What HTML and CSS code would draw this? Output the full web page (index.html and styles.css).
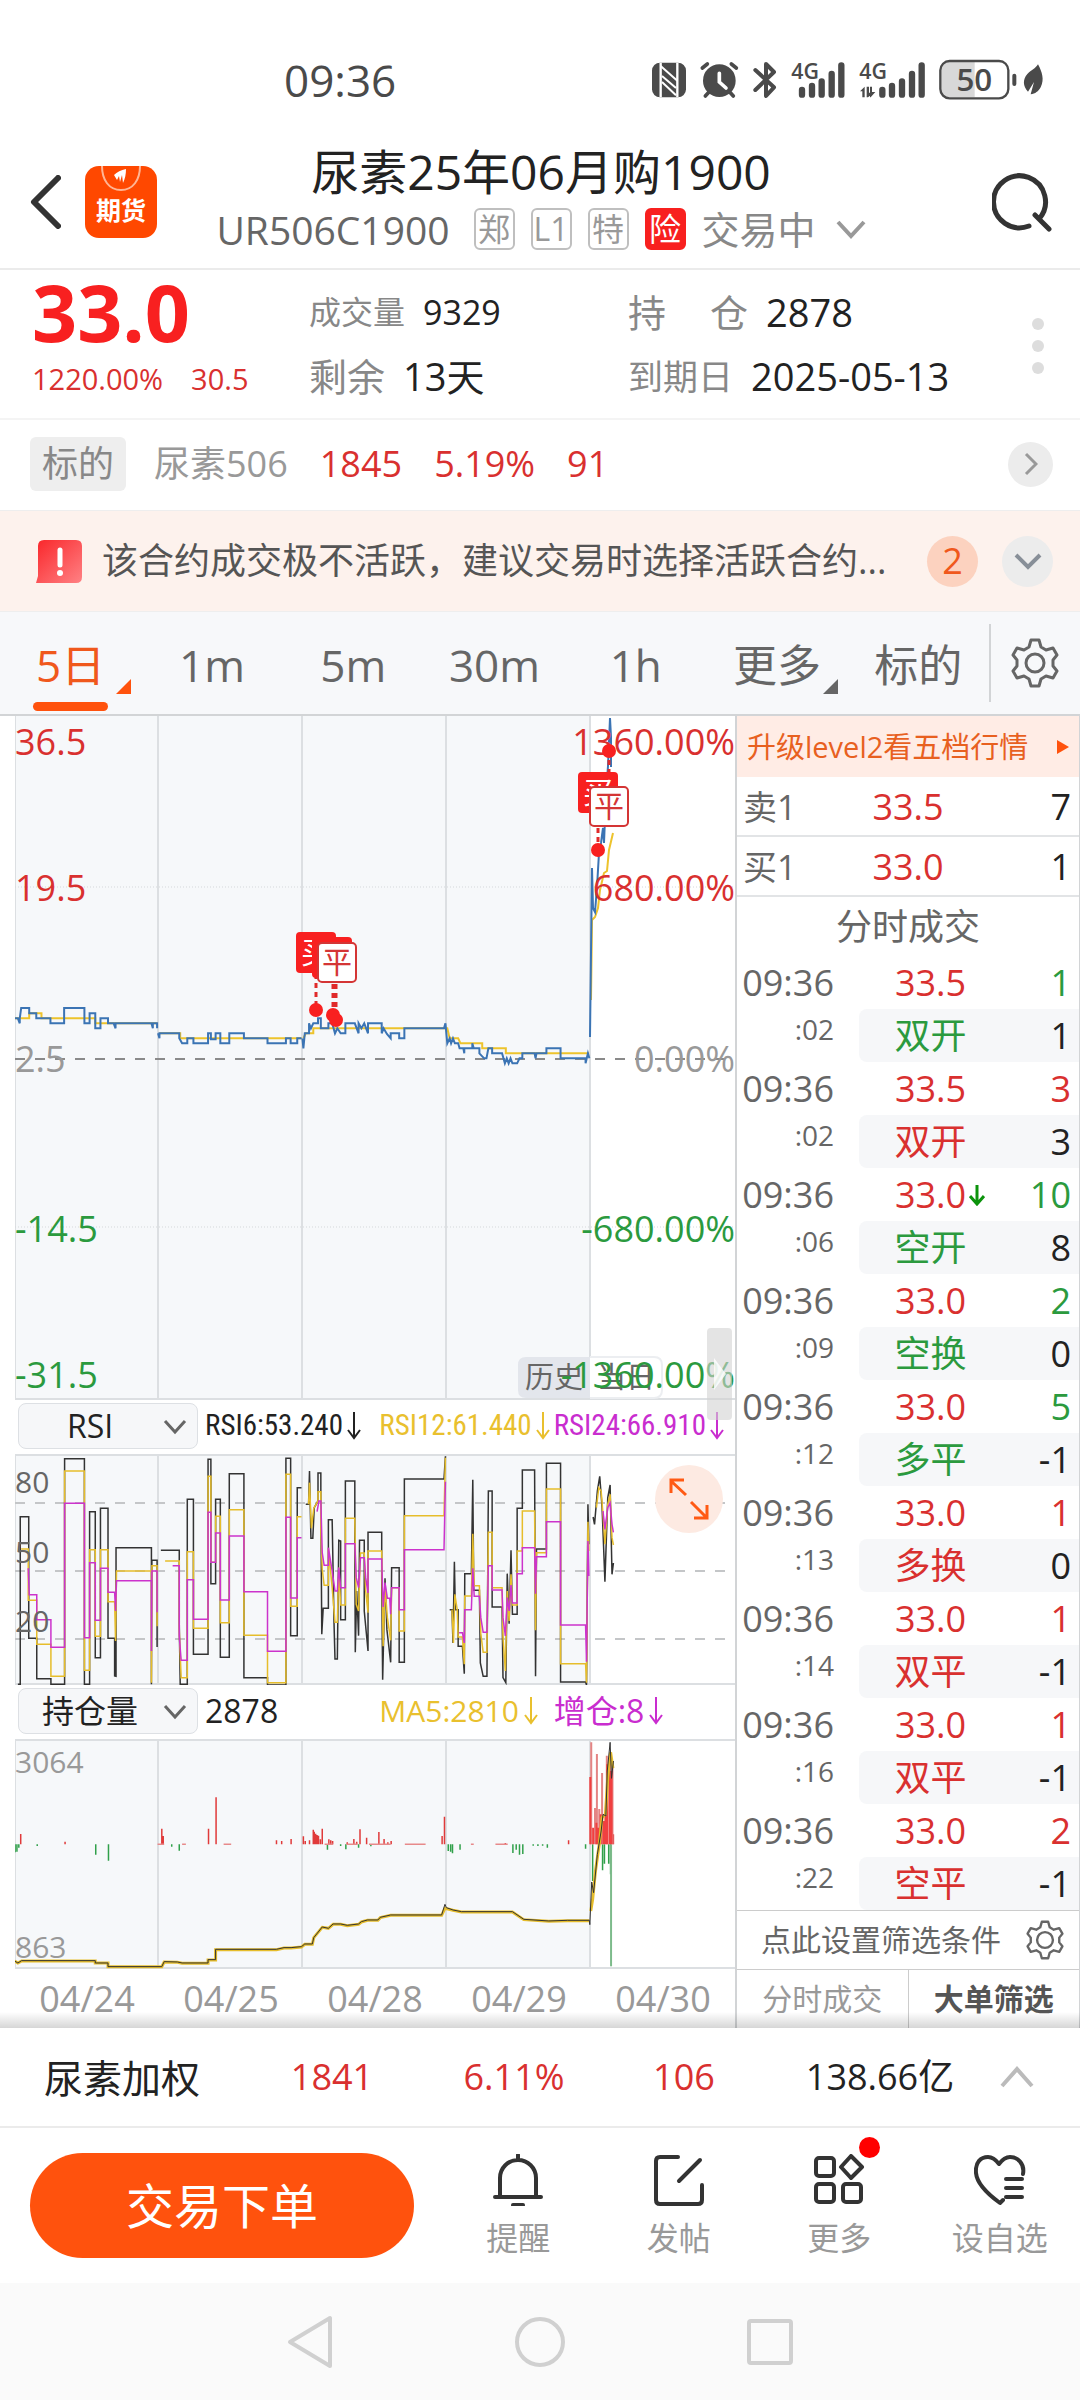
FILE: index.html
```html
<!DOCTYPE html>
<html lang="zh-CN">
<head>
<meta charset="utf-8">
<meta name="viewport" content="width=device-width, initial-scale=1">
<title>尿素25年06月购1900</title>
<link rel="stylesheet" href="styles.css">
</head>
<body>
<header class="status">
  <time class="status-time">09:36</time>
  <svg class="status-icons" viewBox="0 0 1260 180" aria-hidden="true">
    <g fill="#4a4a4a">
      <rect x="36" y="38" width="102" height="104" rx="24"/>
      <path d="M62 38V142M112 38V142" fill="none" stroke="#fff" stroke-width="7"/>
      <path d="M62 48L112 92M66 78L108 114M66 96L108 136" stroke="#fff" stroke-width="6"/>
      <circle cx="238" cy="92" r="49"/>
      <path d="M187 54L202 42M289 54L274 42M207 126L196 138M269 126L280 138" stroke="#4a4a4a" stroke-width="11" stroke-linecap="round"/>
      <path d="M238 70V96L258 114" fill="none" stroke="#fff" stroke-width="11" stroke-linecap="round"/>
      <path d="M346 60L402 112L378 138V42L402 66L346 120" fill="none" stroke="#4a4a4a" stroke-width="12" stroke-linejoin="round" stroke-linecap="round"/>
      <path d="M486 120V134M516 108V134M545 94V134M575 72V134M604 46V134M727 120V134M756 108V134M786 94V134M816 72V134M845 46V134" stroke="#4a4a4a" stroke-width="19" stroke-linecap="round"/>
      <path d="M660 124L674 110V142H667V124ZM680 110H687V128H702L684 142H680ZM690 110H696V126H706L692 142H690Z"/>
    </g>
    <text class="status-net" x="454" y="86">4G</text>
    <text class="status-net" x="658" y="86">4G</text>
    <path d="M926 36H1004V142H926Q904 142 904 120V58Q904 36 926 36Z" fill="#d8d8d8"/>
    <rect x="901" y="33" width="204" height="112" rx="28" fill="none" stroke="#4a4a4a" stroke-width="7"/>
    <text class="status-battery" x="1003" y="124">50</text>
    <rect x="1117" y="71" width="12" height="37" rx="6" fill="#4a4a4a"/>
    <path d="M1194 43C1206 66 1214 88 1202 112C1195 125 1186 131 1172 133L1182 96L1164 125C1148 108 1148 88 1162 72C1174 60 1186 56 1194 43Z" fill="#4a4a4a"/>
  </svg>
</header>

<header class="title-bar">
  <div class="title-left">
    <button class="plain" aria-label="返回"><svg width="31" height="54" viewBox="0 0 31 54"><path d="M28 3L4 27L28 51" fill="none" stroke="#333" stroke-width="6" stroke-linecap="round" stroke-linejoin="round"/></svg></button>
    <a class="app-logo" href="#futures">
      <svg width="40" height="26" viewBox="0 0 40 26" aria-hidden="true"><path d="M1 0C1 14 8 24 20 24S39 14 39 0" fill="none" stroke="#ffb594" stroke-width="2"/><path d="M13 9C16 6 20 4 25 3C25 8 24 13 22 17L21 9L19 16L18 10L16 14Z" fill="#fff"/></svg>
      <span>期货</span>
    </a>
  </div>
  <div class="title-main">
    <h1>尿素25年06月购1900</h1>
    <div class="title-sub">
      <span class="code">UR506C1900</span>
      <span class="chip">郑</span><span class="chip">L1</span><span class="chip">特</span><span class="chip chip-risk">险</span>
      <span class="state">交易中</span>
      <svg class="state-arrow" width="30" height="20" viewBox="0 0 30 20"><path d="M2 3L15 17L28 3" fill="none" stroke="#999" stroke-width="4"/></svg>
    </div>
  </div>
  <button class="plain" aria-label="搜索"><svg width="60" height="60" viewBox="0 0 60 60"><path d="M37 54A26 26 0 1 1 47 47M43 43L57 57" fill="none" stroke="#333" stroke-width="5" stroke-linecap="round"/></svg></button>
</header>

<section class="quote">
  <div class="quote-last">
    <strong>33.0</strong>
    <p><span>1220.00%</span><span>30.5</span></p>
  </div>
  <dl class="quote-col">
    <div><dt class="small">成交量</dt><dd class="mid">9329</dd></div>
    <div><dt>剩余</dt><dd>13天</dd></div>
  </dl>
  <dl class="quote-col">
    <div><dt class="spread"><span>持</span><span>仓</span></dt><dd>2878</dd></div>
    <div><dt class="fit">到期日</dt><dd>2025-05-13</dd></div>
  </dl>
  <button class="plain dots" aria-label="更多行情"><i></i><i></i><i></i></button>
</section>

<section class="underlying">
  <span class="tag">标的</span>
  <span class="muted">尿素506</span>
  <span class="up">1845</span>
  <span class="up">5.19%</span>
  <span class="up">91</span>
  <button class="round round-small" aria-label="标的详情"><svg width="14" height="24" viewBox="0 0 14 24"><path d="M2 2L12 12L2 22" fill="none" stroke="#999" stroke-width="3"/></svg></button>
</section>

<section class="notice">
  <svg class="notice-icon" width="46" height="43" viewBox="0 0 46 43" aria-hidden="true"><defs><linearGradient id="alert" x1="0" y1="0" x2="1" y2="1"><stop offset="0" stop-color="#f9262a"/><stop offset="1" stop-color="#ff8184"/></linearGradient></defs><path d="M8 0H40Q46 0 46 6V37Q46 43 40 43H0L2 36V6Q2 0 8 0Z" fill="url(#alert)"/><path d="M24 10V25" stroke="#fff" stroke-width="5" stroke-linecap="round"/><circle cx="24" cy="33" r="3" fill="#fff"/></svg>
  <p>该合约成交极不活跃，建议交易时选择活跃合约...</p>
  <span class="count">2</span>
  <button class="round" aria-label="展开"><svg width="28" height="18" viewBox="0 0 28 18"><path d="M2 3L14 15L26 3" fill="none" stroke="#888f98" stroke-width="4"/></svg></button>
</section>

<nav class="tabs">
  <button class="tab active corner"><span>5日</span></button>
  <button class="tab"><span>1m</span></button>
  <button class="tab"><span>5m</span></button>
  <button class="tab"><span>30m</span></button>
  <button class="tab"><span>1h</span></button>
  <button class="tab corner"><span>更多</span></button>
  <button class="tab"><span>标的</span></button>
  <button class="settings" aria-label="设置">
    <svg width="48" height="50" viewBox="0 0 48 50"><path d="M20 2H28L30 9L35 12L42 10L46 17L42 22V28L46 33L42 40L35 38L30 41L28 48H20L18 41L13 38L6 40L2 33L6 28V22L2 17L6 10L13 12L18 9Z" fill="none" stroke="#666" stroke-width="3" stroke-linejoin="round"/><circle cx="24" cy="25" r="9" fill="none" stroke="#666" stroke-width="3"/></svg>
  </button>
</nav>

<main class="board">
  <section class="charts">
    <div class="price-wrap">
    <svg class="chart" viewBox="0 0 720 684" role="img" aria-label="5日分时走势">
      <rect width="575" height="684" fill="#f6f8fa"/>
      <g stroke="#dcdfe2" stroke-width="2" fill="none"><path d="M0 0V684M143 0V684M287 0V684M431 0V684M575 0V684"/><path d="M0 683H720"/></g>
      <path d="M0 171H720M0 511H720" stroke="#d5d8db" stroke-width="1" stroke-dasharray="1 2"/>
      <path d="M0 343H720" stroke="#8a8a8a" stroke-width="2" stroke-dasharray="10 10"/>
      <g class="lines" stroke-width="2" transform="matrix(.4719 0 0 .3333 -16 164)">
        <path class="ma" d="M33 415H64V400H90V415H204V430H335M340 460H384V475H641M645 475L650 460H666V445H950L955 475H973L978 490H1024V505H1074V520H1250"/>
        <path class="price" d="M33 415H40L44 430V415L47 384H64V400H79V415H109V430H138V384H181V430H192V400H204V445H215V415H231V430H243L247 445V430H323L326 445V430H335V445M337 460L340 475V460H382V475L388 490H399V475H412V490H443V460H449V478H459V460H469V490H488V460H519V475H569V490H608V475H618V490H632V475H641M643 475L645 505L648 460H657V430L661 445L666 430H676V415H682V445H698V430H706L712 460L717 445L724 460H734V430H754L758 445L762 460V430L768 445L774 430L782 460V430H811V460L815 445L822 462L830 475V460H848V475H859V445H943L946 430L950 490L955 475L958 490L962 475L966 490H973L976 505H984L986 520V505H1003V490L1006 505H1018V520L1028 535H1033L1037 505H1045V520H1066L1072 550L1076 535L1080 550L1084 535L1088 550H1098L1103 535H1109V520H1135L1137 535L1139 520H1160V505H1190V535H1243V550L1248 520L1251 535"/>
      </g>
      <path class="ma" stroke-width="2" d="M576 284L577 204L580 201L583 192L585 174L589 157L592 155L594 134L598 117"/>
      <path class="price" stroke-width="2" d="M575 321L577 152L578 192L580 196L582 171L584 137L586 127L588 112L589 127L591 78L593 50L595 2L596 21V51"/>
      <g class="axis">
        <text class="up" x="0" y="39">36.5</text><text class="up" x="0" y="185">19.5</text><text x="0" y="356">2.5</text><text class="down" x="0" y="526">-14.5</text><text class="down" x="0" y="672">-31.5</text>
        <g text-anchor="end"><text class="up" x="720" y="39">1360.00%</text><text class="up" x="720" y="185">680.00%</text><text x="720" y="356">0.00%</text><text class="down" x="720" y="526">-680.00%</text></g>
      </g>
      <path d="M301 258V294M318 268V299M321 268V305M594 35V72M583 112V135" stroke="#e02a2a" stroke-width="3" stroke-dasharray="5 4"/>
      <g fill="#f82020"><circle cx="301" cy="294" r="7"/><circle cx="318" cy="299" r="7"/><circle cx="321" cy="304" r="7"/><circle cx="594" cy="35" r="7"/><circle cx="583" cy="134" r="7"/>
        <rect x="281" y="216" width="40" height="41" rx="4"/><text class="mark mark-buy" x="301" y="247">买</text>
        <rect x="297" y="221" width="40" height="41" rx="4"/>
        <rect x="563" y="56" width="40" height="41" rx="4"/><text class="mark mark-buy" x="583" y="87">买</text>
      </g>
      <g fill="#fff" stroke="#d43535" stroke-width="2"><rect x="303" y="227" width="38" height="39" rx="4"/><rect x="575" y="71" width="38" height="39" rx="4"/></g>
      <text class="mark mark-close" x="322" y="257">平</text><text class="mark mark-close" x="594" y="101">平</text>
      <path d="M575 641H511Q503 641 503 649V674Q503 682 511 682H575Z" fill="#e3e6ec"/>
      <path d="M575 641H639Q647 641 647 649V674Q647 682 639 682H575" fill="#fff" stroke="#eceef1" stroke-width="2"/>
      <text class="span-label" x="510" y="672">历史</text><text class="span-label" x="582" y="672">当日</text>
      <g class="axis"><text class="down" x="720" y="672" text-anchor="end">-1360.00%</text></g>
    </svg>
    <button class="drag" aria-label="展开盘口"><svg width="16" height="40" viewBox="0 0 16 40"><path d="M2 4L14 20L2 36Z" fill="#fff" fill-opacity=".8"/></svg></button>
    </div>

    <div class="indicator">
      <label class="picker"><select aria-label="指标"><option>RSI</option></select><svg width="24" height="16" viewBox="0 0 24 16"><path d="M2 2L12 13L22 2" fill="none" stroke="#666" stroke-width="3"/></svg></label>
      <span class="narrow">RSI6:53.240<svg class="fall" viewBox="0 0 14 28"><path d="M7 0V26M1 18L7 26L13 18"/></svg></span>
      <span class="narrow yellow">RSI12:61.440<svg class="fall" viewBox="0 0 14 28"><path d="M7 0V26M1 18L7 26L13 18"/></svg></span>
      <span class="narrow pink">RSI24:66.910<svg class="fall" viewBox="0 0 14 28"><path d="M7 0V26M1 18L7 26L13 18"/></svg></span>
    </div>

    <svg class="chart" viewBox="0 0 720 231" role="img" aria-label="RSI">
      <rect width="575" height="231" fill="#f6f8fa"/>
      <path d="M0 0V231M143 0V231M287 0V231M431 0V231M575 0V231M0 1H720M0 230H720" stroke="#dcdfe2" stroke-width="2"/>
      <path d="M0 49H710M0 117H710M0 185H710" stroke="#c4c6c8" stroke-width="2" stroke-dasharray="10 10"/>
      <g class="lines" stroke-width="1.5" transform="matrix(.4719 0 0 .3333 -16 -63)">
        <path class="k" d="M40 880H45V377H63V742H80V863H110V880H139V203H181V880H192V362H204V800H215V352H231V742H245V855L248 856V470H323V880L324 508H335V768M343 478H382V700L384 880H399V325H412V790H443V205H449V578H459V325H469V799H488V248H519V860H569V882H608V202H618V734H632V290H641M650 340H656L658 240L661 442H665L668 350L676 330V246H682V330L684 730L687 652H698V386H706L710 700L712 804H717L720 448L724 450V686H734V270H754V480L755 784L758 600L762 734L764 448H774V660L782 780V424H811V560L813 866L818 562L822 716L830 814L832 530H848V814H859V264H943L946 196M955 656H960L962 756L965 512L967 656H973V766H982L986 848L987 548H1001L1004 266L1006 598H1018L1020 816L1026 856H1034L1037 300H1045V648H1066L1068 860L1074 875L1077 548L1081 698L1085 478L1088 670H1098V352H1109V237H1135L1137 856L1139 474H1160V217H1190V873H1243L1245 882L1248 340L1250 460M1259 378L1262 400L1268 300L1273 256L1278 350L1284 572L1290 320L1295 282L1299 550L1302 516"/>
        <path class="y" d="M47 474H62V628H80V760H110V856H139V240H181V838H192V476H204V736H215V476H231V632H245L247 750L249 540H323V875L324 524H335V706M352 510H382V720L386 860H399V482H412V712H443V256H449V514H459V376H469V695H488V356H519V733H569V875H608V250H618V646H632V377H641M656 340L658 275L662 412L667 352L676 330V302H682V420L685 535L689 583H698V472L706 590L712 694H717L720 530L724 642H734V382H754L757 640L762 660L766 486H774L777 600L782 665V480H811L814 766L818 590L823 680L830 748L832 590H848V720H859V374H943L946 200M960 656L963 756L966 610L971 656L973 738H982L986 820L987 615H1001L1004 428L1007 584H1018L1021 728L1026 784H1034L1037 424H1045V590H1066L1068 740L1073 840L1077 600L1081 690L1085 550L1088 642H1098V480H1109V360H1135L1137 718L1139 485H1160V294H1190V818H1243L1245 875L1248 392L1250 480M1266 350L1271 290L1276 300L1280 370L1284 460L1290 340L1295 310L1299 440L1302 462"/>
        <path class="m" d="M62 532L64 611H80V686H110V769H139V337H181V740H192V515H204V688H215V532H231V604H245L247 660L249 569H323V780L324 540H335V664M368 524H382V735L386 808H399V566H412V685H443V364H449V514H459V426H469V627H488V435H519V602H569V781H608V379H618V621H632V440H641M674 362L678 330H682L685 486L689 523H698V470L706 540L712 600H717L720 530L724 590H734V458H754L757 560L762 590L766 500H774L777 560L782 606V504H811L814 648L818 575L823 622H828L830 670L832 590H848V656H859V476H943L946 272M975 725H982L986 756L987 656H1001L1004 532L1007 616H1018L1021 680L1026 724H1034L1037 524H1045V597H1066L1068 680L1073 735L1077 620L1081 660L1085 582L1088 636H1098V548H1109V470H1135L1137 608L1139 497H1160V392H1190V702H1243L1245 812L1248 450L1250 555M1280 360L1284 415L1290 350L1295 336L1299 400L1302 424"/>
      </g>
      <g class="scale"><text x="0" y="39">80</text><text x="0" y="109">50</text><text x="0" y="178">20</text></g>
      <circle cx="674" cy="45" r="34" fill="#fdeae2"/>
      <path d="M671 41L656 27M656 39V26H669M676 48L692 64M679 64H692V51" fill="none" stroke="#ff5a14" stroke-width="3"/>
    </svg>

    <div class="indicator">
      <label class="picker"><select aria-label="副图"><option>持仓量</option></select><svg width="24" height="16" viewBox="0 0 24 16"><path d="M2 2L12 13L22 2" fill="none" stroke="#666" stroke-width="3"/></svg></label>
      <span class="large">2878</span>
      <span class="yellow">MA5:2810<svg class="fall" viewBox="0 0 14 28"><path d="M7 0V26M1 18L7 26L13 18"/></svg></span>
      <span class="pink large">增仓:8<svg class="fall" viewBox="0 0 14 28"><path d="M7 0V26M1 18L7 26L13 18"/></svg></span>
    </div>

    <svg class="chart" viewBox="0 0 720 230" role="img" aria-label="持仓量">
      <rect width="575" height="230" fill="#f6f8fa"/>
      <path d="M0 0V230M143 0V230M287 0V230M431 0V230M575 0V230M0 1H720M0 229H720" stroke="#dcdfe2" stroke-width="2"/>
      <g class="lines" stroke-width="1.5" transform="matrix(.4719 0 0 .3333 -16 -58)">
        <path d="M46 459V490M140 482V490M345 443V490M348 465V490M444 443V490M460 349V490M588 478V490M599 480V490M619 474V490M645 466V490M649 480V490M658 478V490M666 446V490M668 452V490M671 458V490M674 462V490M677 464V490M681 475V490M685 443V490M699 475V490M703 478V490M707 480V490M738 484V490M752 474V490M758 482V490M765 445V490M779 470V490M805 453V490M816 474V490M824 484V490M831 480V490M939 465V490M944 407V490M1073 486V490M1207 478V490M1302 460V490" stroke="#e03a3a"/>
        <path d="M34 490V514M38 490V512M42 490V500M81 490V495M205 490V521M232 490V539M366 490V497M382 490V509M696 490V506M724 490V495M735 490V505M762 490V500M788 490V496M952 490V510M957 490V512M961 490V517M977 490V506M1089 490V516M1096 490V506M1103 490V521M1110 490V519M1132 490V494M1142 490V495M1152 490V494M1162 490V500M1243 490V503M1258 490V600M1279 490V568M1283 490V548M1292 490V548M1296 490V580" stroke="#30a04a"/>
        <path d="M1297 490V856" stroke="#7dbb8b" stroke-width="2"/>
        <path d="M336 490H350M388 490H396M476 490H492M690 490H708M736 490H760M784 490H830M860 490H904M1000 490H1006M1052 490H1078" stroke="#e78a8a"/>
        <path d="M1255 184V490M1267 219V490M1278 276V490M1263 381V490M1272 384V490M1288 224V490M1300 240V490" stroke="#e48484" stroke-width="2"/>
        <path d="M1253 288V490M1259 440V490M1266 425V490M1270 440V490M1275 400V490M1281 420V490M1285 400V490M1289 250V490M1294 230V490M1298 270V490" stroke="#f04040" stroke-width="2"/>
        <path class="y" stroke-width="3" d="M33 840L40 846L48 840H204V846H231V857H345L350 843L378 844L388 847H443V837H459V806H588L604 801H619L641 798L648 790H664L667 770L685 739L698 742L708 730H724L738 734L762 730L768 723L781 718H803L808 710L830 703H938L945 682L962 688L980 693H1088L1112 716L1165 721L1205 719H1251M1254 690L1258 655L1264 570L1272 490L1278 410L1285 400L1290 290L1296 214L1301 262"/>
        <path class="k" stroke-width="1" d="M33 840L40 846L48 839H204V846H231V857H345L350 842L378 843L388 846H443V836H459V805H588L604 800H619L641 797L648 789H664L667 770L685 738L698 742L708 729H724L738 733L762 729L768 722L781 717H803L808 709L830 702H938L945 670L948 680L962 687L980 692H1088L1112 715L1165 720L1205 718H1251L1252 731L1256 603L1260 635L1268 520L1276 450L1280 400L1286 405L1289 270L1295 184L1298 292L1302 240"/>
      </g>
      <g class="scale scale-light"><text x="0" y="34">3064</text><text x="0" y="219">863</text></g>
    </svg>
    <div class="dates"><span>04/24</span><span>04/25</span><span>04/28</span><span>04/29</span><span>04/30</span></div>
  </section>

  <aside class="side">
    <a class="promo" href="#level2"><span>升级level2看五档行情</span><i></i></a>
    <table class="book">
      <tr><th scope="row">卖1</th><td class="up">33.5</td><td>7</td></tr>
      <tr><th scope="row">买1</th><td class="up">33.0</td><td>1</td></tr>
    </table>
    <h2>分时成交</h2>
    <table class="trades">
      <tr><th>09:36</th><td class="up">33.5</td><td class="down">1</td></tr>
      <tr class="sub"><th>:02</th><td class="down">双开</td><td>1</td></tr>
      <tr><th>09:36</th><td class="up">33.5</td><td class="up">3</td></tr>
      <tr class="sub"><th>:02</th><td class="up">双开</td><td>3</td></tr>
      <tr><th>09:36</th><td class="up"><span class="tick">33.0<svg width="16" height="22" viewBox="0 0 16 22"><path d="M8 1V19M1 12L8 20L15 12" fill="none" stroke="#0c930c" stroke-width="3"/></svg></span></td><td class="down">10</td></tr>
      <tr class="sub"><th>:06</th><td class="down">空开</td><td>8</td></tr>
      <tr><th>09:36</th><td class="up">33.0</td><td class="down">2</td></tr>
      <tr class="sub"><th>:09</th><td class="down">空换</td><td>0</td></tr>
      <tr><th>09:36</th><td class="up">33.0</td><td class="down">5</td></tr>
      <tr class="sub"><th>:12</th><td class="down">多平</td><td>-1</td></tr>
      <tr><th>09:36</th><td class="up">33.0</td><td class="up">1</td></tr>
      <tr class="sub"><th>:13</th><td class="up">多换</td><td>0</td></tr>
      <tr><th>09:36</th><td class="up">33.0</td><td class="up">1</td></tr>
      <tr class="sub"><th>:14</th><td class="up">双平</td><td>-1</td></tr>
      <tr><th>09:36</th><td class="up">33.0</td><td class="up">1</td></tr>
      <tr class="sub"><th>:16</th><td class="up">双平</td><td>-1</td></tr>
      <tr><th>09:36</th><td class="up">33.0</td><td class="up">2</td></tr>
      <tr class="sub"><th>:22</th><td class="up">空平</td><td>-1</td></tr>
    </table>
    <button class="filter"><span>点此设置筛选条件</span><svg width="38" height="40" viewBox="0 0 48 50"><path d="M20 2H28L30 9L35 12L42 10L46 17L42 22V28L46 33L42 40L35 38L30 41L28 48H20L18 41L13 38L6 40L2 33L6 28V22L2 17L6 10L13 12L18 9Z" fill="none" stroke="#666" stroke-width="3" stroke-linejoin="round"/><circle cx="24" cy="25" r="10" fill="none" stroke="#666" stroke-width="3"/></svg></button>
    <div class="side-tabs"><button>分时成交</button><button class="on">大单筛选</button></div>
  </aside>
</main>

<section class="index-row">
  <span>尿素加权</span><span class="up">1841</span><span class="up">6.11%</span><span class="up">106</span><span>138.66亿</span>
  <button class="plain" aria-label="展开指数"><svg width="34" height="22" viewBox="0 0 34 22"><path d="M2 20L17 3L32 20" fill="none" stroke="#bbb" stroke-width="4"/></svg></button>
</section>

<footer class="actions">
  <button class="order">交易下单</button>
  <div class="action-list">
    <button class="action"><svg width="52" height="52" viewBox="0 0 52 52"><path d="M26 1V6M8 43V24A18 18 0 0 1 44 24V43M3 43H49M21 51H31" fill="none" stroke="#333" stroke-width="4" stroke-linecap="round"/></svg>提醒</button>
    <button class="action"><svg width="52" height="52" viewBox="0 0 52 52"><path d="M25 3H7Q3 3 3 7V46Q3 50 7 50H45Q49 50 49 46V31M47 6L26 27" fill="none" stroke="#333" stroke-width="4" stroke-linecap="round"/></svg>发帖</button>
    <button class="action"><span class="dot-host"><svg width="52" height="52" viewBox="0 0 52 52"><g fill="none" stroke="#333" stroke-width="4"><rect x="3" y="4" width="18" height="18" rx="3"/><rect x="3" y="30" width="18" height="18" rx="3"/><rect x="30" y="30" width="18" height="18" rx="3"/><path d="M38 2L49 13L38 24L28 13Z" stroke-linejoin="round"/></g></svg><i></i></span>更多</button>
    <button class="action"><svg width="52" height="52" viewBox="0 0 52 52"><path d="M49 20C51 9 43 3 36 3C31 3 28 6 25 10C22 6 19 3 14 3C7 3 1 8 2 19C3 30 15 41 26 49L29 46M32 25H48M32 34H48M32 43H48" fill="none" stroke="#333" stroke-width="4" stroke-linecap="round" stroke-linejoin="round"/></svg>设自选</button>
  </div>
</footer>

<nav class="system">
  <button class="plain" aria-label="后退"><svg width="46" height="54" viewBox="0 0 46 54"><path d="M43 3V51L3 27Z" fill="none" stroke="#d0d0d0" stroke-width="4" stroke-linejoin="round"/></svg></button>
  <button class="plain" aria-label="主屏幕"><svg width="52" height="52" viewBox="0 0 52 52"><circle cx="26" cy="26" r="23" fill="none" stroke="#d0d0d0" stroke-width="4"/></svg></button>
  <button class="plain" aria-label="最近任务"><svg width="46" height="46" viewBox="0 0 46 46"><rect x="2" y="2" width="42" height="42" rx="2" fill="none" stroke="#d0d0d0" stroke-width="4"/></svg></button>
</nav>
</body>
</html>
```
FILE: styles.css
```css
:root {
  --red: #d9302f;
  --green: #2b9a3e;
  --orange: #ff520d;
  --line: #d2d4d6;
}

* { box-sizing: border-box; }

body {
  margin: 0;
  background: #fff;
  color: #222;
  font-family: "Open Sans", "Noto Sans CJK SC", sans-serif;
  font-size: 36px;
  line-height: 1;
}

h1, h2, p, dl, dd { margin: 0; font-weight: 400; }
i { font-style: normal; }
svg { display: block; flex: none; }
a { color: inherit; text-decoration: none; }
button {
  margin: 0;
  padding: 0;
  border: 0;
  background: none;
  color: inherit;
  font: inherit;
}
.plain { display: flex; align-items: center; justify-content: center; }
.up { color: var(--red); fill: var(--red); }
.down { color: var(--green); fill: var(--green); }
.muted { color: #999; }

/* system status bar */
.status {
  display: flex;
  align-items: center;
  justify-content: space-between;
  height: 124px;
  padding: 36px 20px 0 284px;
}
.status-time { color: #4a4a4a; font-size: 44px; font-weight: 500; }
.status-icons { width: 420px; height: 60px; }
.status-net { fill: #4a4a4a; font-size: 64px; font-weight: 600; }
.status-battery { fill: #4a4a4a; font-size: 94px; font-weight: 600; text-anchor: middle; }

/* contract title */
.title-bar {
  display: grid;
  grid-template-columns: 1fr auto 1fr;
  align-items: center;
  height: 146px;
  padding: 12px 28px 0 30px;
  border-bottom: 2px solid #ebebeb;
}
.title-left { display: flex; align-items: center; gap: 24px; }
.title-bar > .plain { justify-self: end; }
.app-logo {
  display: flex;
  flex-direction: column;
  align-items: center;
  gap: 6px;
  width: 72px;
  height: 72px;
  border-radius: 14px;
  background: #ff4800;
  color: #fff;
  font-size: 25px;
  font-weight: 700;
}
.title-main {
  display: flex;
  flex-direction: column;
  align-items: center;
  gap: 12px;
  padding-bottom: 6px;
}
h1 { font-size: 48px; line-height: 48px; }
.title-sub { display: flex; align-items: center; gap: 16px; font-size: 38px; color: #666; }
.code { margin-right: 8px; font-size: 39px; }
.chip {
  display: flex;
  align-items: center;
  justify-content: center;
  width: 41px;
  height: 42px;
  border: 2px solid #bfbfbf;
  border-radius: 6px;
  color: #999;
  font-size: 32px;
}
.chip-risk { border-color: #f8201f; background: #f8201f; color: #fff; }
.state { color: #888; }
.state-arrow { margin-left: 4px; }

/* quote */
.quote {
  display: grid;
  grid-template-columns: 277px 319px 1fr 24px;
  height: 150px;
  padding: 10px 30px 0 32px;
  border-bottom: 2px solid #f4f4f4;
}
.quote-last strong {
  display: block;
  height: 70px;
  color: #f82020;
  font-size: 79px;
  font-weight: 700;
  line-height: 64px;
}
.quote-last p { display: flex; gap: 28px; margin-top: 14px; color: var(--red); font-size: 29px; }
.quote-col { display: flex; flex-direction: column; gap: 24px; padding-top: 12px; }
.quote-col div { display: flex; align-items: center; height: 40px; gap: 18px; }
.quote-col dt { color: #888; font-size: 38px; }
.quote-col dt.small { font-size: 32px; }
.quote-col dt.fit { font-size: 35px; }
.quote-col dt.spread { display: flex; justify-content: space-between; width: 120px; }
.quote-col dd { font-size: 38px; }
.quote-col dd.mid { font-size: 34px; }
.dots { flex-direction: column; gap: 10px; height: 84px; margin-top: 24px; }
.dots i { width: 12px; height: 12px; border-radius: 50%; background: #ddd; }

/* underlying */
.underlying {
  display: flex;
  align-items: center;
  gap: 32px;
  height: 90px;
  padding: 0 27px 2px 30px;
}
.tag {
  padding: 9px 12px;
  margin-right: -4px;
  border-radius: 6px;
  background: #eee;
  color: #888;
}
.round {
  display: flex;
  align-items: center;
  justify-content: center;
  flex: none;
  width: 51px;
  height: 51px;
  border-radius: 50%;
  background: #ececec;
}
.round-small { width: 45px; height: 45px; margin-left: auto; }

/* inactivity notice */
.notice {
  display: flex;
  align-items: center;
  height: 102px;
  padding: 0 27px 0 36px;
  border-top: 1px solid #eee;
  border-bottom: 1px solid #eee;
  background: #fdf2ed;
  color: #555;
}
.notice p { flex: 1; padding-left: 20px; white-space: nowrap; }
.count {
  display: flex;
  align-items: center;
  justify-content: center;
  width: 51px;
  height: 51px;
  margin-right: 24px;
  border-radius: 50%;
  background: #fcd2bf;
  color: #f0581c;
}

/* period tabs */
.tabs {
  display: flex;
  height: 104px;
  border-bottom: 2px solid var(--line);
  background: #f7f8fa;
  color: #666;
  font-size: 44px;
}
.tab { position: relative; flex: 1; padding-top: 3px; }
.corner::after {
  content: "";
  position: absolute;
  right: 10px;
  bottom: 20px;
  border-left: 15px solid transparent;
  border-bottom: 15px solid #666;
}
.active { color: #f0581c; }
.active::before {
  content: "";
  position: absolute;
  left: 33px;
  right: 33px;
  bottom: 3px;
  height: 9px;
  border-radius: 5px;
  background: var(--orange);
}
.active::after { border-bottom-color: var(--orange); }
.settings {
  display: flex;
  align-items: center;
  justify-content: center;
  width: 91px;
  margin: 12px 0;
  border-left: 2px solid var(--line);
}

/* charts and side panel */
.board { position: relative; display: flex; }
.board::after {
  content: "";
  position: absolute;
  inset: auto 0 0 0;
  height: 16px;
  background: linear-gradient(rgba(0, 0, 0, 0), rgba(0, 0, 0, .16));
  pointer-events: none;
}
.charts { flex: 1; min-width: 0; padding-left: 15px; }
.chart { width: 100%; height: auto; }
.price-wrap { position: relative; }
.drag {
  position: absolute;
  right: 3px;
  bottom: -20px;
  display: flex;
  align-items: center;
  justify-content: center;
  width: 25px;
  height: 92px;
  border-radius: 4px;
  background: rgba(210, 210, 210, .6);
}
.lines path, .ma, .price { fill: none; vector-effect: non-scaling-stroke; }
.ma { stroke: #edc32c; }
.price { stroke: #3b74b4; }
.k { stroke: #333; }
.y { stroke: #e6bd2b; }
.m { stroke: #cc33cc; }
.axis { font-size: 36px; fill: #999; }
.scale { font-size: 30px; font-weight: 500; fill: #666; }
.scale-light { fill: #999; }
.mark { font-size: 30px; text-anchor: middle; }
.mark-buy { fill: #fff; }
.mark-close { fill: #d43535; }
.span-label { font-size: 29px; fill: #666; }

.indicator {
  display: grid;
  grid-template-columns: 180px repeat(3, minmax(0, 1fr));
  align-items: center;
  height: 54px;
  padding: 0 14px 3px 3px;
  font-size: 30px;
}
.indicator > span { display: flex; align-items: center; gap: 5px; padding-left: 7px; white-space: nowrap; }
.indicator > .large { font-size: 32px; }
.indicator > .narrow {
  gap: 4px;
  font-family: "Liberation Sans Narrow", "Roboto Condensed", Roboto, sans-serif;
  font-size: 29px;
}
.yellow { color: #e9c02e; }
.pink { color: #c92dcf; }
.fall { width: 14px; height: 28px; fill: none; stroke: currentColor; stroke-width: 2; }
.picker { position: relative; display: block; }
.picker select {
  display: block;
  width: 100%;
  height: 46px;
  padding: 0 36px 0 0;
  border: 1px solid #dde0e4;
  border-radius: 8px;
  appearance: none;
  background: #f6f7f9;
  color: #222;
  font: inherit;
  font-size: 32px;
  line-height: 44px;
  text-align-last: center;
}
.picker svg { position: absolute; right: 11px; top: 16px; pointer-events: none; }
.dates { display: flex; height: 59px; align-items: center; color: #999; }
.dates span { flex: 1; text-align: center; }

.side {
  width: 345px;
  border-left: 2px solid var(--line);
  border-right: 1px solid var(--line);
}
.promo {
  display: flex;
  align-items: center;
  justify-content: space-between;
  height: 61px;
  padding: 0 10px;
  background: #ffece5;
  color: #e8601f;
  font-size: 29px;
}
.promo i {
  border: 7px solid transparent;
  border-right: 0;
  border-left: 12px solid var(--orange);
}
table { width: 100%; border-collapse: separate; border-spacing: 0; table-layout: fixed; }
th, td { padding: 0; font-weight: 400; }
th { color: #666; }
.book th, .book td { height: 60px; padding-top: 2px; border-bottom: 2px solid #e2e4e6; text-align: center; }
.book th { padding-left: 6px; font-size: 34px; text-align: left; }
.book td:last-child, .trades td:last-child { padding-right: 8px; text-align: right; }
h2 { height: 59px; color: #666; font-size: 36px; line-height: 59px; text-align: center; }
.trades th, .trades td { height: 53px; text-align: center; }
.trades th { width: 122px; padding-right: 25px; text-align: right; }
.trades td:last-child { width: 77px; }
.trades .sub th { padding-bottom: 14px; font-size: 28px; }
.trades .sub td { background: #f6f7f9; }
.trades .sub td:nth-child(2) { border-radius: 8px 0 0 8px; }
.tick { position: relative; }
.tick svg { position: absolute; left: 100%; margin-left: 3px; top: 14px; }
.filter {
  display: flex;
  align-items: center;
  justify-content: space-between;
  width: 100%;
  height: 59px;
  padding: 0 15px 0 24px;
  border-top: 1px solid #ccc;
  color: #666;
  font-size: 30px;
}
.side-tabs { display: flex; height: 59px; border-top: 1px solid #ccc; color: #999; font-size: 30px; }
.side-tabs button { flex: 1; }
.side-tabs .on { border-left: 1px solid #ccc; color: #555; font-weight: 700; }

/* index summary */
.index-row {
  display: grid;
  grid-template-columns: 198px 180px 184px 156px 236px 1fr;
  align-items: center;
  height: 100px;
  padding: 0 44px 0 44px;
  border-bottom: 2px solid #ebebeb;
  text-align: center;
}
.index-row > :first-child { font-size: 39px; text-align: left; }

/* bottom actions */
.actions { display: flex; align-items: center; height: 155px; padding-left: 30px; }
.order {
  width: 384px;
  height: 105px;
  border-radius: 53px;
  background: var(--orange);
  color: #fff;
  font-size: 48px;
}
.action-list { display: flex; flex: 1; padding: 0 0 4px 24px; }
.action {
  display: flex;
  flex: 1;
  flex-direction: column;
  align-items: center;
  gap: 16px;
  color: #999;
  font-size: 32px;
}
.dot-host { position: relative; }
.dot-host i {
  position: absolute;
  top: -17px;
  right: -15px;
  width: 21px;
  height: 21px;
  border-radius: 50%;
  background: #f00;
}

/* system navigation */
.system {
  display: flex;
  align-items: center;
  justify-content: center;
  gap: 181px;
  height: 118px;
  background: #fafafa;
}
```
